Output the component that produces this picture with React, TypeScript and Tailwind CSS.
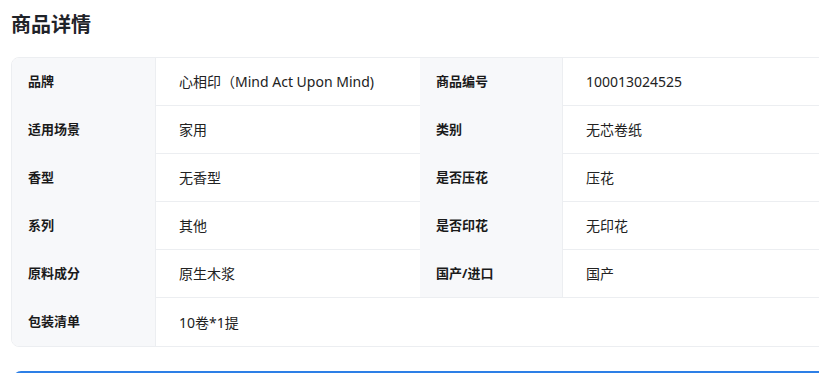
const rows: [string, string, string?, string?][] = [
  ["品牌", "心相印（Mind Act Upon Mind)", "商品编号", "100013024525"],
  ["适用场景", "家用", "类别", "无芯卷纸"],
  ["香型", "无香型", "是否压花", "压花"],
  ["系列", "其他", "是否印花", "无印花"],
  ["原料成分", "原生木浆", "国产/进口", "国产"],
  ["包装清单", "10卷*1提"],
];

const font = "font-['Noto_Sans','Noto_Sans_CJK_SC',sans-serif]";
const labelCls =
  "flex items-center pl-4 bg-[#f7f8fa] border-r border-[#eceef1] text-[13px] font-bold text-[#1a1a1a]";
const valueCls = "flex items-center pl-[23px] text-[14px] text-[#222]";

export default function App() {
  return (
    <div className={`w-[819px] h-[373px] overflow-hidden bg-white ${font}`}>
      <div className="pl-[11px] pt-[11px]">
        <h2 className="text-[20px] leading-[28px] font-bold text-[#1f2329]">商品详情</h2>
        <div className="mt-[18px] w-[900px] rounded-lg border border-[#eceef1] overflow-hidden">
          <div className="grid grid-cols-[144px_264px_143px_1fr]">
            {rows.map((r, i) => {
              const last = i === rows.length - 1;
              const beforeLast = i === rows.length - 2;
              const h = beforeLast ? "h-[47px]" : "h-12";
              const valBorder = !beforeLast ? "border-b border-[#eceef1]" : "";
              return last ? (
                <div key={i} className="contents">
                  <div className={`h-[49px] ${labelCls}`}>{r[0]}</div>
                  <div className={`col-span-3 h-[49px] border-t border-[#eceef1] ${valueCls}`}>{r[1]}</div>
                </div>
              ) : (
                <div key={i} className="contents">
                  <div className={`${h} ${labelCls}`}>{r[0]}</div>
                  <div className={`${h} ${valueCls} ${valBorder}`}>{r[1]}</div>
                  <div className={`${h} ${labelCls}`}>{r[2]}</div>
                  <div className={`${h} ${valueCls} ${valBorder}`}>{r[3]}</div>
                </div>
              );
            })}
          </div>
        </div>
        <div className="mt-6 ml-[2px] w-[900px] h-10 rounded-lg border-t-2 border-[#2d7fe6]" />
      </div>
    </div>
  );
}
